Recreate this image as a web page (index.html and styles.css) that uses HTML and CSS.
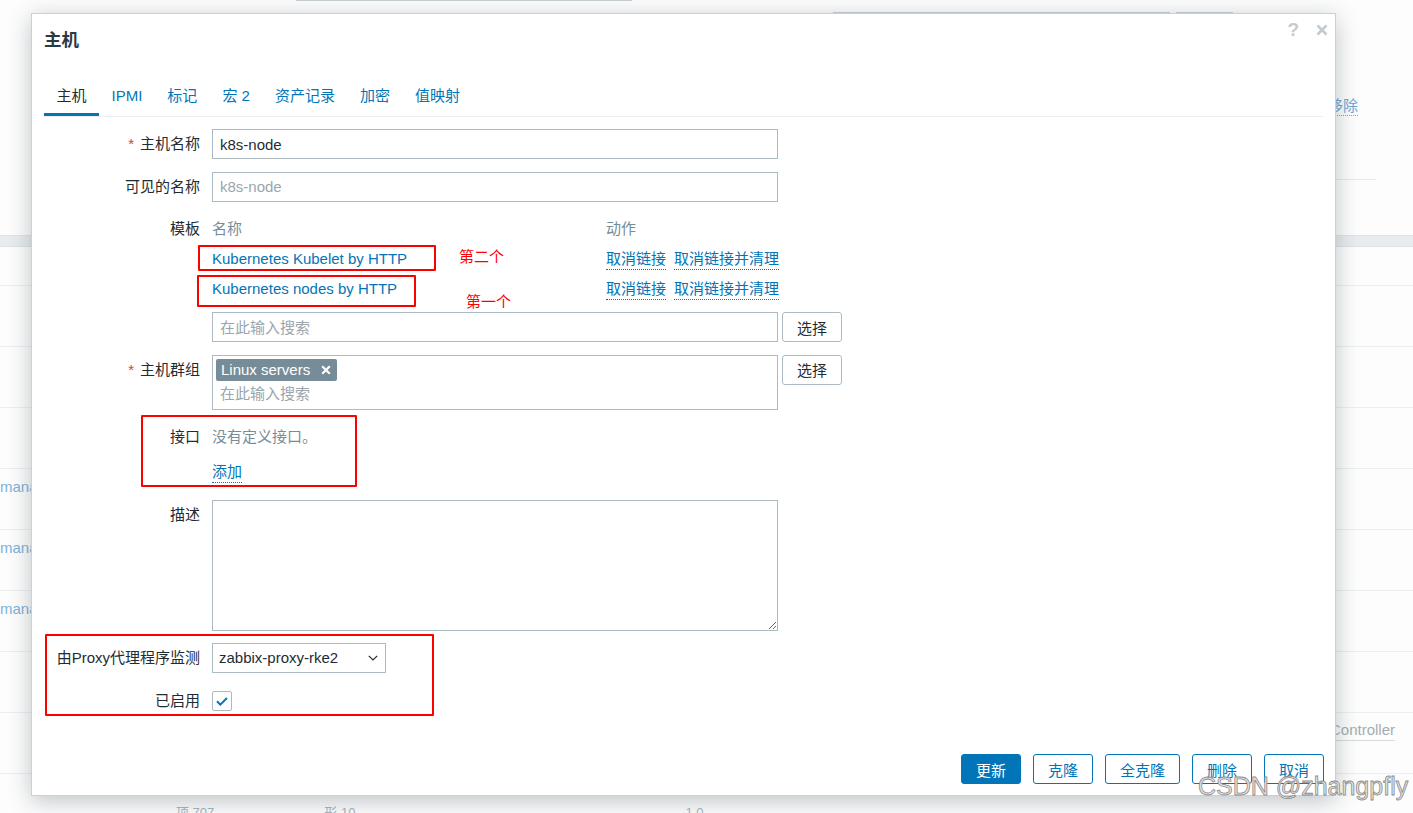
FILE: index.html
```html
<!DOCTYPE html>
<html lang="zh-CN">
<head>
<meta charset="utf-8">
<title>主机</title>
<link rel="stylesheet" href="styles.css">
</head>
<body>
<div class="bg">
  <div class="bg-top">
    <div class="bg-topline"></div>
    <div class="bg-fields"><span class="bg-field w1"></span><span class="bg-field w2"></span></div>
    <div class="bg-remove"><span class="bg-link">移除</span></div>
    <div class="bg-hline"></div>
  </div>
  <div class="bg-band"></div>
  <div class="bg-row first"></div>
  <div class="bg-row"></div>
  <div class="bg-row"></div>
  <div class="bg-row"></div>
  <div class="bg-row"><span class="bg-l">manager</span></div>
  <div class="bg-row"><span class="bg-l">manager</span></div>
  <div class="bg-row"><span class="bg-l">manager</span></div>
  <div class="bg-row"></div>
  <div class="bg-row"><span class="bg-r">Controller</span></div>
  <div class="bg-row last"><span class="bg-s s1">项 707</span><span class="bg-s s2">形 10</span><span class="bg-s s3">1 0</span></div>
</div>

<div class="dialog">
  <div class="dlg-head">
    <h4 class="dlg-title">主机</h4>
    <div class="dlg-tools">
      <span class="tool-help">?</span>
      <svg class="tool-close" width="12" height="12" viewBox="0 0 12 12"><path d="M1.5 1.5L10.5 10.5M10.5 1.5L1.5 10.5" stroke="#c3cbd0" stroke-width="2.6" fill="none"/></svg>
    </div>
  </div>

  <ul class="tabs">
    <li class="tab active">主机</li>
    <li class="tab">IPMI</li>
    <li class="tab">标记</li>
    <li class="tab">宏 2</li>
    <li class="tab">资产记录</li>
    <li class="tab">加密</li>
    <li class="tab">值映射</li>
  </ul>

  <div class="form">
    <label class="lbl"><span class="req">*</span>主机名称</label>
    <div class="fld"><input class="input" type="text" value="k8s-node"></div>
    <div class="side"></div>

    <label class="lbl">可见的名称</label>
    <div class="fld"><input class="input" type="text" placeholder="k8s-node"></div>
    <div class="side"></div>

    <label class="lbl">模板</label>
    <div class="fld">
      <div class="tpl-row tpl-head"><span class="tpl-name">名称</span><span class="tpl-act">动作</span></div>
      <div class="tpl-row"><span class="tpl-name"><a class="link">Kubernetes Kubelet by HTTP</a></span><span class="tpl-act"><a class="act">取消链接</a><a class="act">取消链接并清理</a></span></div>
      <div class="tpl-row"><span class="tpl-name"><a class="link">Kubernetes nodes by HTTP</a></span><span class="tpl-act"><a class="act">取消链接</a><a class="act">取消链接并清理</a></span></div>
      <input class="input search" type="text" placeholder="在此输入搜索">
    </div>
    <div class="side side-end"><button class="btn-grey">选择</button></div>

    <label class="lbl"><span class="req">*</span>主机群组</label>
    <div class="fld">
      <div class="ms">
        <span class="chip">Linux servers<svg width="10" height="10" viewBox="0 0 10 10"><path d="M1.2 1.2L8.8 8.8M8.8 1.2L1.2 8.8" stroke="#fff" stroke-width="2.2" fill="none"/></svg></span>
        <span class="ms-input">在此输入搜索</span>
      </div>
    </div>
    <div class="side"><button class="btn-grey">选择</button></div>

    <label class="lbl">接口</label>
    <div class="fld">
      <div class="line muted">没有定义接口。</div>
      <div class="line add"><a class="act">添加</a></div>
    </div>
    <div class="side"></div>

    <label class="lbl">描述</label>
    <div class="fld"><textarea class="textarea"></textarea></div>
    <div class="side"></div>

    <label class="lbl">由Proxy代理程序监测</label>
    <div class="fld">
      <div class="select"><span>zabbix-proxy-rke2</span><svg width="10" height="6" viewBox="0 0 10 6"><path d="M0.8 0.8L5 5L9.2 0.8" stroke="#1f2c33" stroke-width="1.2" fill="none"/></svg></div>
    </div>
    <div class="side"></div>

    <label class="lbl">已启用</label>
    <div class="fld fld-check">
      <span class="check"><svg width="12" height="9" viewBox="0 0 12 9"><path d="M1 4.3L4.3 7.6L11 1" stroke="#0275b8" stroke-width="2" fill="none"/></svg></span>
    </div>
    <div class="side"></div>
  </div>

  <div class="dlg-foot">
    <button class="btn primary">更新</button>
    <button class="btn">克隆</button>
    <button class="btn">全克隆</button>
    <button class="btn">删除</button>
    <button class="btn">取消</button>
  </div>
</div>

<div class="mark m1"></div>
<div class="mark m2"></div>
<div class="mark m3"></div>
<div class="mark m4"></div>
<div class="note n1">第二个</div>
<div class="note n2">第一个</div>
<div class="watermark">CSDN @zhangpfly</div>
</body>
</html>
```

FILE: styles.css
```css
* { box-sizing: border-box; }
html, body { margin: 0; padding: 0; }
body {
  width: 1413px;
  height: 813px;
  overflow: hidden;
  position: relative;
  background: #fdfdfd;
  font-family: "Liberation Sans", "Noto Sans CJK SC", sans-serif;
  font-size: 15px;
  color: #1f2c33;
}

/* background page */
.bg { width: 1413px; }
.bg-top { height: 235px; overflow: hidden; }
.bg-topline { margin-left: 296px; width: 336px; height: 1px; background: #c8d0d4; }
.bg-fields { display: flex; gap: 6px; margin: 11px 0 0 833px; height: 1px; }
.bg-field { height: 1px; background: #c8d0d4; }
.bg-field.w1 { width: 337px; }
.bg-field.w2 { width: 57px; }
.bg-remove { margin-top: 83px; text-align: right; padding-right: 55px; height: 21px; }
.bg-link { display: inline-block; line-height: 19px; color: #6aa9d6; border-bottom: 1px dotted #6aa9d6; }
.bg-hline { margin: 62px 37px 0 auto; width: 260px; height: 1px; background: #e6e9eb; }
.bg-band { height: 12px; background: #e9ecee; border-top: 1px solid #e1e5e8; border-bottom: 1px solid #dfe3e6; }
.bg-row { display: flex; height: 61px; border-bottom: 1px solid #eceff1; padding-top: 7px; line-height: 22px; }
.bg-row.first { height: 39px; }
.bg-l { color: #7fb3d9; }
.bg-r { margin-left: 1330px; color: #a3adb3; border-bottom: 1px solid #d6dbde; height: 21px; line-height: 20px; }
.bg-row.last { border-bottom: 0; padding-top: 31px; font-size: 13px; line-height: 16px; }
.bg-s { color: #a4b6c1; }
.s1 { margin-left: 176px; }
.s2 { margin-left: 110px; }
.s3 { margin-left: 330px; }

/* dialog */
.dialog {
  position: absolute;
  left: 31px;
  top: 13px;
  width: 1305px;
  height: 783px;
  background: #fff;
  border: 1px solid #c9d1d5;
  box-shadow: 0 5px 22px rgba(60, 75, 85, 0.32);
  display: flex;
  flex-direction: column;
}
.dlg-head { display: flex; align-items: flex-start; padding: 11px 7px 0 12px; }
.dlg-title { flex: 1; margin: 0; font-size: 17.5px; font-weight: bold; line-height: 30px; color: #2a3a44; }
.dlg-tools { display: flex; align-items: center; gap: 17px; margin-top: -5px; height: 20px; }
.tool-help { font-size: 19px; font-weight: bold; color: #c3cbd0; line-height: 20px; }
.tool-close { display: block; }

.tabs { display: flex; list-style: none; padding: 0; margin: 23px 12px 0; border-bottom: 1px solid #ebeef0; }
.tab { padding: 0 12.5px; height: 38px; line-height: 35px; border-bottom: 3px solid transparent; color: #0275b8; white-space: nowrap; }
.tab.active { color: #1f2c33; border-bottom-color: #0275b8; }

.form {
  display: grid;
  grid-template-columns: 168px 566px 64px;
  row-gap: 12.5px;
  padding: 12px 12px 0;
  align-items: start;
}
.lbl { text-align: right; padding-right: 12px; line-height: 30px; white-space: nowrap; }
.req { color: #e33734; margin-right: 6px; }
.side { padding-left: 4px; }
.side-end { align-self: end; }

.input {
  display: block;
  width: 100%;
  height: 30px;
  border: 1px solid #acbbc2;
  border-radius: 0;
  padding: 0 7px;
  font: inherit;
  font-size: 15px;
  color: #1f2c33;
  background: #fff;
  outline: none;
}
.input::placeholder { color: #9ba6ac; opacity: 1; }
.search { margin-top: 8px; }

.tpl-row { display: flex; height: 30px; line-height: 30px; white-space: nowrap; }
.tpl-name { width: 394px; flex: none; }
.tpl-head { color: #768d99; }
.tpl-act { display: flex; gap: 8px; flex: none; white-space: nowrap; }
.link { color: #0275b8; }
.act { color: #0275b8; border-bottom: 1px dotted #0275b8; line-height: 19px; display: inline-block; height: 21px; margin-top: 5px; white-space: nowrap; }

.btn-grey {
  display: block;
  width: 60px;
  height: 30px;
  border: 1px solid #acbbc2;
  border-radius: 3px;
  background: #fff;
  font: inherit;
  font-size: 15px;
  color: #1f2c33;
  padding: 0;
}

.ms { height: 55px; border: 1px solid #acbbc2; padding: 3px; }
.chip {
  display: inline-flex;
  align-items: center;
  gap: 11px;
  height: 22px;
  padding: 0 6px 0 5px;
  background: #768d99;
  color: #fff;
  border-radius: 2px;
  line-height: 22px;
}
.ms-input { display: block; margin-top: 1px; height: 24px; line-height: 24px; padding-left: 4px; color: #9ba6ac; }

.line { height: 30px; line-height: 30px; }
.muted { color: #768d99; }
.add { margin-top: 5px; }

.textarea {
  display: block;
  width: 566px;
  height: 131px;
  border: 1px solid #acbbc2;
  border-radius: 0;
  font: inherit;
  padding: 4px 7px;
  outline: none;
}

.select {
  display: flex;
  align-items: center;
  justify-content: space-between;
  width: 174px;
  height: 30px;
  border: 1px solid #acbbc2;
  padding: 0 7px 0 6px;
  line-height: 28px;
}

.fld-check { height: 30px; display: flex; align-items: center; }
.check {
  display: flex;
  align-items: center;
  justify-content: center;
  width: 20px;
  height: 20px;
  border: 1px solid #acbbc2;
  border-radius: 2px;
  padding-top: 1px;
}

.dlg-foot { margin-top: auto; display: flex; justify-content: flex-end; gap: 12px; padding: 0 11px 11px 12px; }
.btn {
  height: 30px;
  min-width: 60px;
  padding: 0 14px;
  border: 1px solid #0275b8;
  border-radius: 3px;
  background: #fff;
  color: #0275b8;
  font: inherit;
  font-size: 15px;
}
.btn.primary { background: #0275b8; color: #fff; }

/* annotations */
.mark { position: absolute; border: 2px solid #ff0000; border-radius: 1px; }
.m1 { left: 198px; top: 245px; width: 238px; height: 26px; }
.m2 { left: 197px; top: 275px; width: 219px; height: 32px; }
.m3 { left: 141px; top: 415px; width: 216px; height: 72px; }
.m4 { left: 45px; top: 634px; width: 389px; height: 82px; }
.note { position: absolute; color: #ff0000; font-size: 15px; line-height: 20px; }
.n1 { left: 459px; top: 247px; }
.n2 { left: 466px; top: 292px; }
.watermark {
  position: absolute;
  left: 1198px;
  top: 771px;
  font-size: 25px;
  line-height: 30px;
  color: #e4e4e4;
  -webkit-text-stroke: 0.8px #8d8d8d;
  white-space: nowrap;
}
```
